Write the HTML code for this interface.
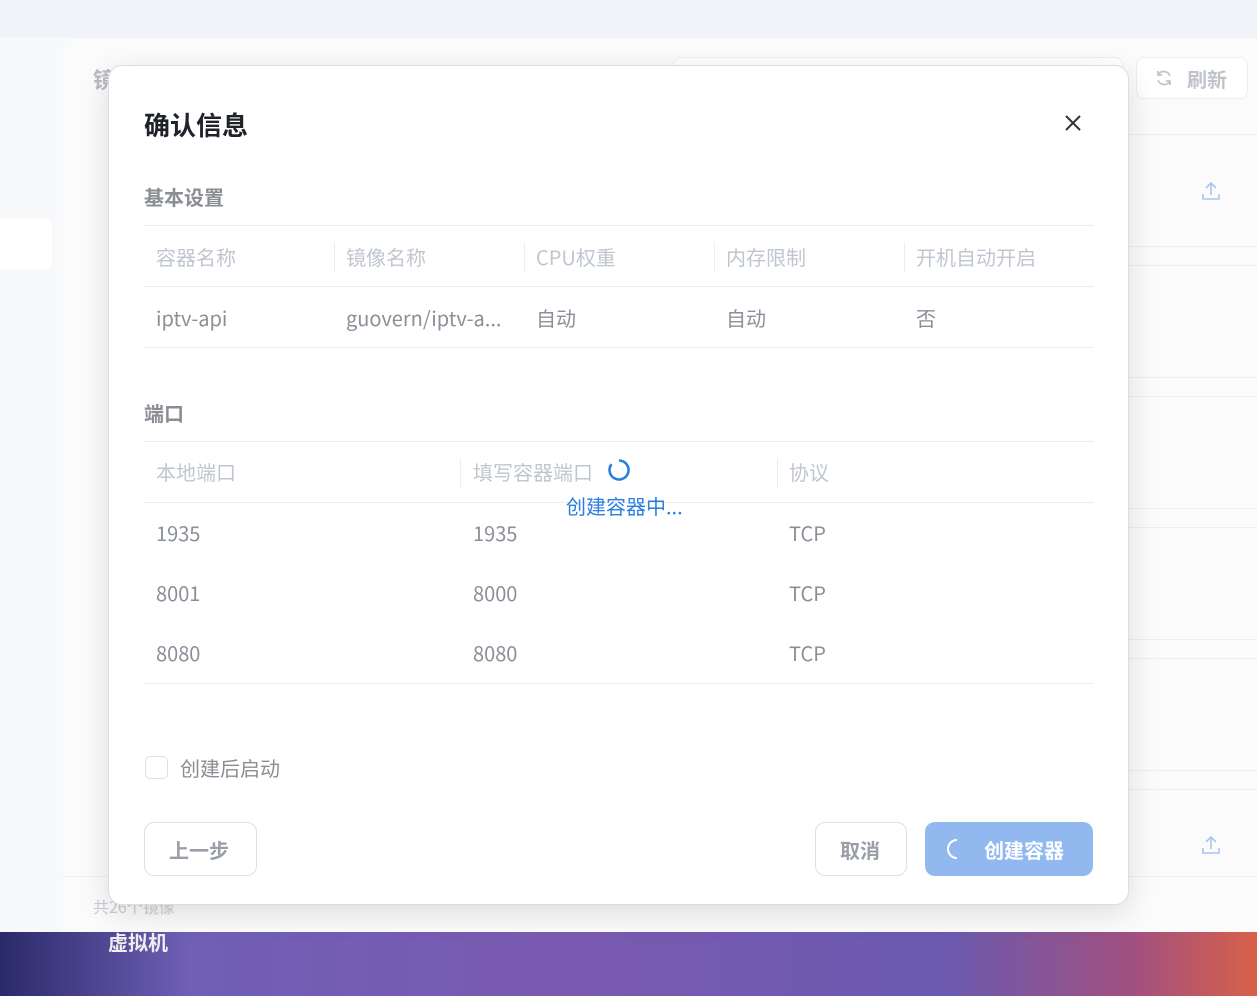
<!DOCTYPE html>
<html><head><meta charset="utf-8">
<style>
*{box-sizing:border-box;margin:0;padding:0}
body{width:1257px;height:996px;overflow:hidden;position:relative;background:#f8f9fb;font-family:"Noto Sans CJK SC","Liberation Sans",sans-serif}
.top{position:absolute;left:0;top:0;width:1257px;height:38px;background:#f0f3f8}
.card{position:absolute;left:63px;top:38px;width:1194px;height:894px;background:#fbfbfc;border-radius:14px 0 0 0}
.bottom{position:absolute;left:0;top:932px;width:1257px;height:64px;background:linear-gradient(90deg,#2a2a6a 0%,#6f5fb5 15%,#7a5ab0 45%,#6a5ab0 75%,#a05080 90%,#d8604a 100%)}
.abs{position:absolute}
.modal{position:absolute;left:108px;top:65px;width:1021px;height:840px;background:#fff;border-radius:14px;border:1px solid #dcdde0;box-shadow:0 8px 30px rgba(0,0,0,.12)}
.t{position:absolute;white-space:nowrap;line-height:28px;height:28px}
.hd{color:#c0c6d0;font-size:20px}
.cell{color:#8a8f98;font-size:20px}
.line{position:absolute;height:1px;background:#eceef2}
.sep{position:absolute;width:1px;height:30px;background:#eceef2}
</style></head><body>
<div class="top"></div>
<div class="card"></div>
<div class="abs" style="left:0;top:218px;width:52px;height:52px;background:#fff;border-radius:0 8px 8px 0"></div>
<div class="t" style="left:93px;top:65px;font-size:22px;color:#b9bcc2;font-weight:bold">镜</div>
<div class="abs" style="left:673px;top:57px;width:450px;height:44px;border:1px solid #eceef2;border-radius:8px;background:#fff"></div>
<div class="abs" style="left:1136px;top:57px;width:112px;height:42px;border:1px solid #eceef2;border-radius:8px;background:#fff"></div>
<svg class="abs" style="left:1154px;top:68px" width="20" height="20" viewBox="0 0 20 20" fill="none" stroke="#c2c6cc" stroke-width="1.8"><path d="M16 8a6.5 6.5 0 0 0-12-1M4 3v4h4M4 12a6.5 6.5 0 0 0 12 1M16 17v-4h-4"/></svg>
<div class="t" style="left:1187px;top:65px;font-size:20px;color:#bfc3ca;font-weight:bold">刷新</div>
<div class="line" style="left:1129px;top:134px;width:128px"></div>
<div class="line" style="left:1129px;top:246px;width:128px"></div>
<div class="line" style="left:1129px;top:265px;width:128px"></div>
<div class="line" style="left:1129px;top:377px;width:128px"></div>
<div class="line" style="left:1129px;top:396px;width:128px"></div>
<div class="line" style="left:1129px;top:508px;width:128px"></div>
<div class="line" style="left:1129px;top:527px;width:128px"></div>
<div class="line" style="left:1129px;top:639px;width:128px"></div>
<div class="line" style="left:1129px;top:658px;width:128px"></div>
<div class="line" style="left:1129px;top:770px;width:128px"></div>
<div class="line" style="left:1129px;top:789px;width:128px"></div>
<div class="line" style="left:63px;top:876px;width:1194px"></div>
<svg class="abs" style="left:1200px;top:180px" width="22" height="22" viewBox="0 0 22 22" fill="none" stroke="#a9c6ee" stroke-width="1.6"><path d="M11 3v12M6 8l5-5 5 5M3 14v5h16v-5"/></svg>
<svg class="abs" style="left:1200px;top:834px" width="22" height="22" viewBox="0 0 22 22" fill="none" stroke="#a9c6ee" stroke-width="1.6"><path d="M11 3v12M6 8l5-5 5 5M3 14v5h16v-5"/></svg>
<div class="t" style="left:93px;top:892px;font-size:16px;color:#c9ccd2">共26个镜像</div>
<div class="bottom"></div>
<div class="t" style="left:108px;top:928px;font-size:20px;color:#eee;font-weight:bold">虚拟机</div>

<div class="modal">
<div class="t" style="left:35px;top:43px;font-size:26px;line-height:32px;height:32px;font-weight:bold;color:#1f2329">确认信息</div>
<svg class="abs" style="left:955px;top:48px" width="18" height="18" viewBox="0 0 18 18" stroke="#333" stroke-width="2"><path d="M2 2l14 14M16 2L2 16"/></svg>
<div class="t" style="left:35px;top:117px;font-size:20px;font-weight:bold;color:#8a8d93">基本设置</div>
<div class="line" style="left:35px;top:159px;width:950px"></div>
<div class="t hd" style="left:47px;top:177px">容器名称</div>
<div class="sep" style="left:225px;top:176px"></div>
<div class="t hd" style="left:237px;top:177px">镜像名称</div>
<div class="sep" style="left:415px;top:176px"></div>
<div class="t hd" style="left:427px;top:177px">CPU权重</div>
<div class="sep" style="left:605px;top:176px"></div>
<div class="t hd" style="left:617px;top:177px">内存限制</div>
<div class="sep" style="left:795px;top:176px"></div>
<div class="t hd" style="left:807px;top:177px">开机自动开启</div>
<div class="line" style="left:35px;top:220px;width:950px"></div>
<div class="t cell" style="left:47px;top:238px">iptv-api</div>
<div class="t cell" style="left:237px;top:238px">guovern/iptv-a...</div>
<div class="t cell" style="left:427px;top:238px">自动</div>
<div class="t cell" style="left:617px;top:238px">自动</div>
<div class="t cell" style="left:807px;top:238px">否</div>
<div class="line" style="left:35px;top:281px;width:950px"></div>

<div class="t" style="left:35px;top:333px;font-size:20px;font-weight:bold;color:#8a8d93">端口</div>
<div class="line" style="left:35px;top:375px;width:950px"></div>
<div class="t hd" style="left:47px;top:392px">本地端口</div>
<div class="sep" style="left:351px;top:392px"></div>
<div class="t hd" style="left:364px;top:392px">填写容器端口</div>
<div class="sep" style="left:668px;top:392px"></div>
<div class="t hd" style="left:680px;top:392px">协议</div>
<div class="line" style="left:35px;top:436px;width:950px"></div>
<svg class="abs" style="left:498px;top:392px" width="24" height="24" viewBox="0 0 24 24" fill="none" stroke="#2b7de0" stroke-width="2.6"><path d="M12 2.5a9.5 9.5 0 1 1-7.5 3.7"/></svg>
<div class="t" style="left:457px;top:426px;font-size:20px;color:#2b7de0">创建容器中...</div>
<div class="t cell" style="left:47px;top:453px">1935</div>
<div class="t cell" style="left:364px;top:453px">1935</div>
<div class="t cell" style="left:680px;top:453px">TCP</div>
<div class="t cell" style="left:47px;top:513px">8001</div>
<div class="t cell" style="left:364px;top:513px">8000</div>
<div class="t cell" style="left:680px;top:513px">TCP</div>
<div class="t cell" style="left:47px;top:573px">8080</div>
<div class="t cell" style="left:364px;top:573px">8080</div>
<div class="t cell" style="left:680px;top:573px">TCP</div>
<div class="line" style="left:35px;top:617px;width:950px"></div>

<div class="abs" style="left:36px;top:690px;width:23px;height:23px;border:1px solid #dcdfe6;border-radius:5px"></div>
<div class="t" style="left:71px;top:688px;font-size:20px;color:#8a8d93">创建后启动</div>

<div class="abs" style="left:35px;top:756px;width:113px;height:54px;border:1px solid #dcdfe6;border-radius:10px"></div>
<div class="t" style="left:60px;top:770px;font-size:20px;font-weight:bold;color:#9a9ea6">上一步</div>
<div class="abs" style="left:706px;top:756px;width:92px;height:54px;border:1px solid #dcdfe6;border-radius:10px"></div>
<div class="t" style="left:731px;top:770px;font-size:20px;font-weight:bold;color:#9a9ea6">取消</div>
<div class="abs" style="left:816px;top:756px;width:168px;height:54px;background:#92b9ef;border-radius:10px"></div>
<svg class="abs" style="left:838px;top:772px" width="20" height="22" viewBox="0 0 20 22" fill="none" stroke="#fff" stroke-width="2"><path d="M10 2a9 9 0 0 0 0 18"/></svg>
<div class="t" style="left:875px;top:770px;font-size:20px;font-weight:bold;color:#fff">创建容器</div>
</div>
</body></html>
